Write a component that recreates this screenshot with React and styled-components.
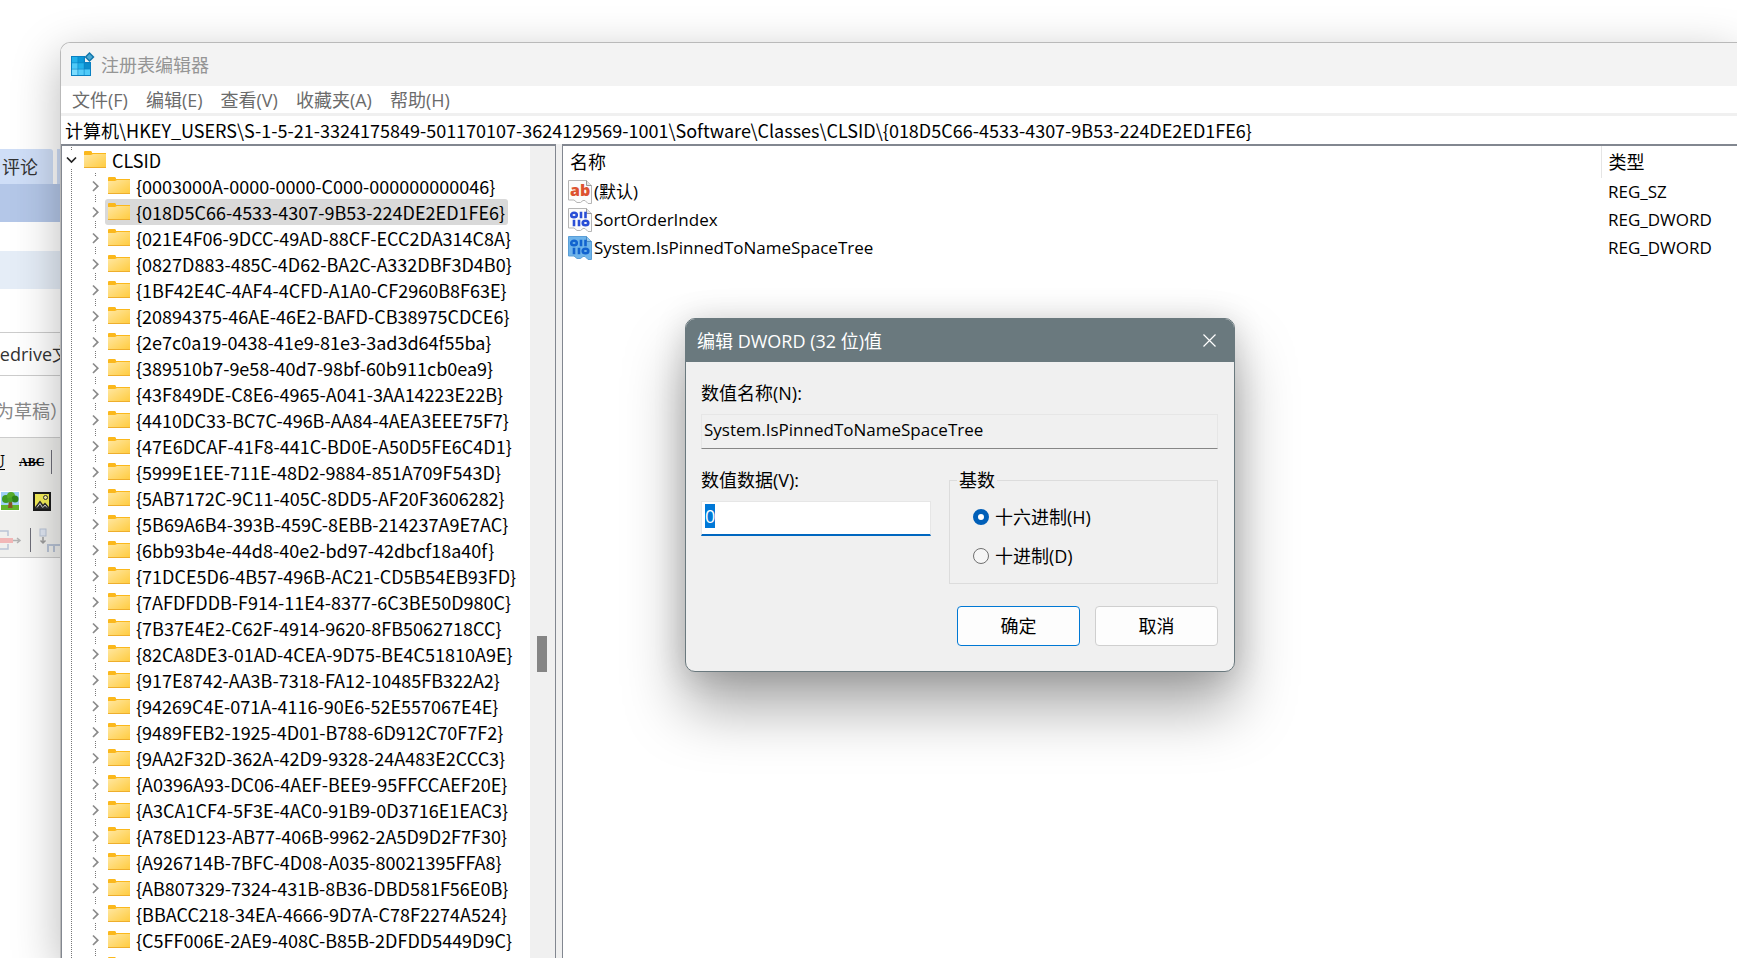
import React, { useEffect, useRef } from 'react';
import styled, { createGlobalStyle, css } from 'styled-components';

const KEYS = [
  '{0003000A-0000-0000-C000-000000000046}',
  '{018D5C66-4533-4307-9B53-224DE2ED1FE6}',
  '{021E4F06-9DCC-49AD-88CF-ECC2DA314C8A}',
  '{0827D883-485C-4D62-BA2C-A332DBF3D4B0}',
  '{1BF42E4C-4AF4-4CFD-A1A0-CF2960B8F63E}',
  '{20894375-46AE-46E2-BAFD-CB38975CDCE6}',
  '{2e7c0a19-0438-41e9-81e3-3ad3d64f55ba}',
  '{389510b7-9e58-40d7-98bf-60b911cb0ea9}',
  '{43F849DE-C8E6-4965-A041-3AA14223E22B}',
  '{4410DC33-BC7C-496B-AA84-4AEA3EEE75F7}',
  '{47E6DCAF-41F8-441C-BD0E-A50D5FE6C4D1}',
  '{5999E1EE-711E-48D2-9884-851A709F543D}',
  '{5AB7172C-9C11-405C-8DD5-AF20F3606282}',
  '{5B69A6B4-393B-459C-8EBB-214237A9E7AC}',
  '{6bb93b4e-44d8-40e2-bd97-42dbcf18a40f}',
  '{71DCE5D6-4B57-496B-AC21-CD5B54EB93FD}',
  '{7AFDFDDB-F914-11E4-8377-6C3BE50D980C}',
  '{7B37E4E2-C62F-4914-9620-8FB5062718CC}',
  '{82CA8DE3-01AD-4CEA-9D75-BE4C51810A9E}',
  '{917E8742-AA3B-7318-FA12-10485FB322A2}',
  '{94269C4E-071A-4116-90E6-52E557067E4E}',
  '{9489FEB2-1925-4D01-B788-6D912C70F7F2}',
  '{9AA2F32D-362A-42D9-9328-24A483E2CCC3}',
  '{A0396A93-DC06-4AEF-BEE9-95FFCCAEF20E}',
  '{A3CA1CF4-5F3E-4AC0-91B9-0D3716E1EAC3}',
  '{A78ED123-AB77-406B-9962-2A5D9D2F7F30}',
  '{A926714B-7BFC-4D08-A035-80021395FFA8}',
  '{AB807329-7324-431B-8B36-DBD581F56E0B}',
  '{BBACC218-34EA-4666-9D7A-C78F2274A524}',
  '{C5FF006E-2AE9-408C-B85B-2DFDD5449D9C}',
  '',
];

const SELECTED = '{018D5C66-4533-4307-9B53-224DE2ED1FE6}';

const VALUES = [
  { name: '(默认)', type: 'REG_SZ', kind: 'string' },
  { name: 'SortOrderIndex', type: 'REG_DWORD', kind: 'binary' },
  { name: 'System.IsPinnedToNameSpaceTree', type: 'REG_DWORD', kind: 'binary', selected: true },
];

const MENU = ['文件(F)', '编辑(E)', '查看(V)', '收藏夹(A)', '帮助(H)'];

function FolderIcon() {
  return (
    <svg width="22" height="18" viewBox="0 0 22 18" aria-hidden="true">
      <defs>
        <linearGradient id="folder" x1="0" y1="0" x2="1" y2="1">
          <stop offset="0" stopColor="#ffe7a2" />
          <stop offset="1" stopColor="#ffcb3d" />
        </linearGradient>
      </defs>
      <path d="M0 1Q0 0 1 0H7L8 1V2H22V5H0Z" fill="#fbb81c" />
      <path d="M0 4H7L9 3H22V17H0Z" fill="url(#folder)" />
      <path d="M0 16.5H22" stroke="#eeae2c" />
    </svg>
  );
}

function Chevron({ open }) {
  return (
    <svg width="13" height="18" viewBox="0 0 13 18" fill="none" aria-hidden="true">
      {open ? (
        <path d="M2 6.5L6.5 11L11 6.5" stroke="#222" strokeWidth="1.7" />
      ) : (
        <path d="M4 4.5L8.8 9.2L4 14" stroke="#8a8a8a" strokeWidth="1.7" />
      )}
    </svg>
  );
}

function RegeditIcon() {
  const fills = ['#22b1ea', '#0b98d8', null, '#4fcaf8', '#22b1ea', '#0b8ccb', '#7bdcff', '#55ccfa', '#4fcaf8'];
  return (
    <svg width="24" height="26" viewBox="0 0 24 26" aria-hidden="true">
      <path d="M0 4H14V10H20V24H0Z" fill="#0a80c2" />
      {fills.map(
        (fill, i) =>
          fill && (
            <rect key={i} x={1 + (i % 3) * 6.2} y={5 + Math.floor(i / 3) * 6.2} width="5.6" height="5.6" fill={fill} />
          )
      )}
      <path d="M18.5 0L23.5 5L18.5 10L13.5 5Z" fill="#0f75aa" />
      <path d="M18.5 2L21.5 5L18.5 8L15.5 5Z" fill="#4aa9d3" />
    </svg>
  );
}

function ValueIcon({ kind, selected }) {
  const ink = selected ? '#1263cf' : '#2a4fd6';
  return (
    <svg width="24" height="24" viewBox="0 0 24 24" aria-hidden="true">
      <path
        d="M0.5 0.5H18.5L23.5 5.5V23.5H20L17 20.5H15L12.5 22.5H9L6 20H0.5Z"
        fill={selected ? '#6fb4ea' : '#fbfbfb'}
        stroke={selected ? '#5a9fd8' : '#b5b5b5'}
      />
      <path d="M18.5 0.5V5.5H23.5" fill={selected ? '#93c8ef' : '#e4e4e4'} stroke={selected ? '#4f8cc0' : '#9a9a9a'} />
      {kind === 'string' ? (
        <text x="2" y="16" fontFamily="Open Sans, sans-serif" fontSize="16" fontWeight="800" fill="#dd5330">
          ab
        </text>
      ) : (
        <g fill="none" stroke={ink} strokeWidth="2.6">
          <ellipse cx="6" cy="7" rx="2.8" ry="2.2" />
          <path d="M13 3.7V10.3M17.5 3.7V10.3M6 11.7V18.3M11 11.7V18.3" />
          <ellipse cx="17.5" cy="15" rx="2.8" ry="2.2" />
        </g>
      )}
    </svg>
  );
}

function TreePicture() {
  return (
    <svg width="20" height="20" viewBox="0 0 20 20" aria-hidden="true">
      <rect width="20" height="20" fill="#fff" />
      <rect x="1" y="1" width="18" height="14" fill="#9fd0f5" />
      <rect x="1" y="14" width="18" height="5" fill="#63b52c" />
      <path d="M9 9H12L12.5 17H8Z" fill="#8a5526" />
      <circle cx="6" cy="8" r="4" fill="#3f9a22" />
      <circle cx="11" cy="5" r="4" fill="#57ad2c" />
      <circle cx="15" cy="8" r="3.5" fill="#2f851c" />
      <circle cx="10" cy="9" r="2.5" fill="#48a327" />
    </svg>
  );
}

function LandscapePicture() {
  return (
    <svg width="18" height="19" viewBox="0 0 18 19" aria-hidden="true">
      <rect x="1" y="1" width="16" height="17" fill="#f5ee58" stroke="#1c1c1c" strokeWidth="2" />
      <circle cx="12.5" cy="5.5" r="2" fill="#fff6a8" stroke="#333" />
      <path d="M2 15L7 8.5L10 12.5L12 10.5L16 15V17H2Z" fill="#2d2d2d" />
      <path d="M4 15.5L7 11.5L9.5 15.5M10 15.5L12 13L14 15.5" fill="none" stroke="#d8d8d8" />
    </svg>
  );
}

function FadedAlign() {
  return (
    <svg width="22" height="20" viewBox="0 0 22 20" fill="none" aria-hidden="true">
      <path d="M0 1H8V6M0 19H8V14" stroke="#b9c4d6" strokeWidth="1.5" />
      <rect x="0" y="8" width="13" height="5" fill="#f1b7b7" />
      <path d="M13 10.5H20M17 8L20 10.5L17 13" stroke="#b3b3b3" strokeWidth="1.5" />
    </svg>
  );
}

function FadedFlow() {
  return (
    <svg width="22" height="24" viewBox="0 0 22 24" fill="none" aria-hidden="true">
      <rect x="1" y="1" width="6" height="7" fill="#dfe6f2" stroke="#b9c4d6" />
      <path d="M4 9V15M1.5 12.5L4 15L6.5 12.5" stroke="#9c9c9c" strokeWidth="1.5" />
      <path d="M9 24V17H22M15 17V24" stroke="#b9c4d6" strokeWidth="2" />
    </svg>
  );
}

export default function App() {
  const dataRef = useRef(null);

  useEffect(() => {
    dataRef.current.focus();
    dataRef.current.select();
  }, []);

  return (
    <>
      <GlobalStyle />
      <Desktop>
        <Backdrop>
          <TabStrip>
            <PageTab>评论</PageTab>
            <PageTab />
          </TabStrip>
          <Band />
          <PaleBand />
          <TitleField>nedrive文</TitleField>
          <DraftNote>为草稿）</DraftNote>
          <EditorTools>
            <ToolRow>
              <Underlined>U</Underlined>
              <Struck>ABC</Struck>
              <ToolDivider />
            </ToolRow>
            <ToolRow $gap={13}>
              <TreePicture />
              <LandscapePicture />
            </ToolRow>
            <ToolRow $gap={8}>
              <FadedAlign />
              <ToolDivider />
              <FadedFlow />
            </ToolRow>
          </EditorTools>
        </Backdrop>

        <Window>
          <TitleBar>
            <RegeditIcon />
            注册表编辑器
          </TitleBar>
          <MenuBar>
            {MENU.map((item) => (
              <MenuButton key={item}>{item}</MenuButton>
            ))}
          </MenuBar>
          <Address
            aria-label="地址"
            readOnly
            value="计算机\HKEY_USERS\S-1-5-21-3324175849-501170107-3624129569-1001\Software\Classes\CLSID\{018D5C66-4533-4307-9B53-224DE2ED1FE6}"
          />
          <Panes>
            <TreePane>
              <Tree>
                <TreeRow>
                  <Toggle aria-label="折叠">
                    <Chevron open />
                  </Toggle>
                  <Key>
                    <FolderIcon />
                    CLSID
                  </Key>
                </TreeRow>
                {KEYS.map((key) => (
                  <TreeRow key={key}>
                    <Trunk />
                    <Toggle aria-label="展开">
                      <Chevron />
                    </Toggle>
                    <Key $selected={key === SELECTED}>
                      <FolderIcon />
                      {key}
                    </Key>
                  </TreeRow>
                ))}
              </Tree>
              <Scrollbar>
                <Thumb />
              </Scrollbar>
            </TreePane>
            <ListPane>
              <ValueTable>
                <thead>
                  <tr>
                    <HeadCell>名称</HeadCell>
                    <HeadCell $type>类型</HeadCell>
                  </tr>
                </thead>
                <tbody>
                  {VALUES.map((value) => (
                    <tr key={value.name}>
                      <Cell>
                        <ValueName>
                          <ValueIcon kind={value.kind} selected={value.selected} />
                          {value.name}
                        </ValueName>
                      </Cell>
                      <Cell $type>{value.type}</Cell>
                    </tr>
                  ))}
                </tbody>
              </ValueTable>
            </ListPane>
          </Panes>
        </Window>

        <Dialog role="dialog" aria-labelledby="dialog-title">
          <DialogTitle>
            <span id="dialog-title">编辑 DWORD (32 位)值</span>
            <CloseButton aria-label="关闭">
              <svg width="13" height="13" viewBox="0 0 13 13" stroke="#fff" strokeWidth="1.2">
                <path d="M0.5 0.5L12.5 12.5M12.5 0.5L0.5 12.5" />
              </svg>
            </CloseButton>
          </DialogTitle>
          <DialogBody>
            <Label htmlFor="value-name">数值名称(N):</Label>
            <NameInput id="value-name" readOnly value="System.IsPinnedToNameSpaceTree" />
            <Columns>
              <DataField>
                <Label htmlFor="value-data">数值数据(V):</Label>
                <DataInput id="value-data" ref={dataRef} defaultValue="0" />
              </DataField>
              <Base>
                <legend>基数</legend>
                <Choice>
                  <Radio name="base" defaultChecked />
                  十六进制(H)
                </Choice>
                <Choice>
                  <Radio name="base" />
                  十进制(D)
                </Choice>
              </Base>
            </Columns>
            <Actions>
              <Button $primary>确定</Button>
              <Button>取消</Button>
            </Actions>
          </DialogBody>
        </Dialog>
      </Desktop>
    </>
  );
}

const GlobalStyle = createGlobalStyle`
  * {
    box-sizing: border-box;
  }

  body {
    margin: 0;
    background: #fff;
    font-family: 'Open Sans', 'Noto Sans CJK SC', sans-serif;
    font-size: 18px;
    line-height: 24px;
    color: #000;
  }

  button,
  input {
    font: inherit;
    color: inherit;
  }

  svg {
    flex: none;
    display: block;
  }
`;

const dotted = css`
  background: repeating-linear-gradient(#777 0 1px, transparent 1px 2px) 9px 0 / 1px 100% no-repeat;
`;

const Desktop = styled.div`
  position: relative;
  display: grid;
  grid-template-columns: 60px minmax(0, 1fr);
  height: 100vh;
  overflow: hidden;
`;

/* the web page that shows behind the registry window */
const Backdrop = styled.div`
  display: flex;
  flex-direction: column;
  padding-top: 149px;
  overflow: hidden;
  white-space: nowrap;
  color: #333;
`;

const TabStrip = styled.div`
  display: flex;
  gap: 4px;
  height: 35px;
`;

const PageTab = styled.div`
  flex: none;
  width: 53px;
  padding: 6px 0 0 2px;
  border-radius: 0 3px 0 0;
  background: #cfdef7;
`;

const Band = styled.div`
  height: 38px;
  background: #b4c7e8;
`;

const PaleBand = styled.div`
  height: 38px;
  margin-top: 29px;
  background: #e5edf7;
`;

const TitleField = styled.div`
  display: flex;
  justify-content: flex-end;
  align-items: center;
  width: 70px;
  height: 44px;
  margin-top: 43px;
  border: solid #ccc;
  border-width: 1px 0;
`;

const DraftNote = styled.div`
  display: flex;
  justify-content: flex-end;
  align-items: center;
  width: 68px;
  height: 61px;
  padding-top: 8px;
  color: #888;
`;

const EditorTools = styled.div`
  display: flex;
  flex-direction: column;
  gap: 15px;
  padding: 12px 0 5px;
  border: solid #ccc;
  border-width: 1px 0;
  background: #f0f0ee;
`;

const ToolRow = styled.div`
  display: flex;
  align-items: center;
  gap: ${(p) => p.$gap || 0}px;
  height: 24px;
`;

const Underlined = styled.span`
  display: flex;
  justify-content: flex-end;
  width: 5px;
  margin-right: 14px;
  font: bold 18px 'Liberation Serif', serif;
  text-decoration: underline;
  color: #000;
`;

const Struck = styled.span`
  width: 32px;
  font: bold 12px 'Liberation Serif', serif;
  text-decoration: line-through;
  color: #000;
`;

const ToolDivider = styled.span`
  flex: none;
  width: 1px;
  height: 24px;
  background: #6d6d78;
`;

const Window = styled.main`
  display: flex;
  flex-direction: column;
  margin-top: 42px;
  border: solid #b9b9b9;
  border-width: 1px 0 0 1px;
  border-radius: 10px 0 0 0;
  background: #fff;
  box-shadow: 0 14px 48px rgba(0, 0, 0, 0.28);
  overflow: hidden;
`;

const TitleBar = styled.header`
  display: flex;
  align-items: center;
  gap: 6px;
  height: 43px;
  padding-left: 10px;
  background: #f3f3f3;
  color: #959595;
`;

const MenuBar = styled.nav`
  display: flex;
  gap: 18px;
  height: 30px;
  padding-left: 11px;
  border-bottom: 3px solid #f0f0f0;
`;

const MenuButton = styled.button`
  padding: 0;
  border: none;
  background: none;
  color: #6b6b6b;
`;

const Address = styled.input`
  height: 28px;
  padding: 0 4px;
  border: none;
  outline: none;
  font-family: 'Noto Sans CJK SC', sans-serif;
`;

const Panes = styled.div`
  display: flex;
  gap: 6px;
  flex: 1;
  min-height: 0;
  background: #f0f0f0;
`;

const pane = css`
  border: solid #828790;
  border-width: 2px 1px 0;
  background: #fff;
  overflow: hidden;
`;

const TreePane = styled.section`
  ${pane}
  display: flex;
  flex: none;
  width: 495px;
`;

const Tree = styled.ul`
  flex: 1;
  margin: 0;
  padding: 1px 0 0;
  list-style: none;
  font-family: 'Noto Sans CJK SC', sans-serif;
`;

const TreeRow = styled.li`
  display: flex;
  height: 26px;
`;

const Trunk = styled.span`
  flex: none;
  width: 24px;
  ${dotted}
`;

const Toggle = styled.button`
  display: flex;
  align-items: center;
  justify-content: center;
  width: 19px;
  padding: 0;
  border: none;
  ${dotted}

  svg {
    background: #fff;
  }
`;

const Key = styled.span`
  display: flex;
  align-items: center;
  gap: 6px;
  padding: 0 3px;
  border-radius: 3px;
  background: ${(p) => (p.$selected ? '#d9d9d9' : 'none')};
  white-space: nowrap;
`;

const Scrollbar = styled.div`
  width: 25px;
  padding: 490px 8px 0 7px;
  background: #f0f0f0;
`;

const Thumb = styled.div`
  height: 36px;
  background: #858585;
`;

const ListPane = styled.section`
  ${pane}
  flex: 1;
  border-right: none;
`;

const ValueTable = styled.table`
  width: 100%;
  border-collapse: collapse;
`;

const HeadCell = styled.th`
  width: ${(p) => (p.$type ? '136px' : 'auto')};
  height: 32px;
  padding: 0 7px;
  border-left: ${(p) => (p.$type ? '1px solid #e5e5e5' : 'none')};
  text-align: left;
  font-weight: 400;
`;

const Cell = styled.td`
  height: 28px;
  padding: 0 0 0 ${(p) => (p.$type ? 7 : 5)}px;
  font-size: 17px;
`;

const ValueName = styled.span`
  display: flex;
  align-items: center;
  gap: 2px;
`;

const Dialog = styled.section`
  position: absolute;
  left: 685px;
  top: 318px;
  width: 550px;
  border: 1px solid #6a797e;
  border-radius: 10px;
  background: #f0f0f0;
  box-shadow: 0 36px 60px rgba(0, 0, 0, 0.34), 0 2px 32px rgba(0, 0, 0, 0.16);
  overflow: hidden;
`;

const DialogTitle = styled.header`
  display: flex;
  align-items: center;
  justify-content: space-between;
  height: 43px;
  padding: 0 7px 0 11px;
  background: #6a797e;
  color: #fff;
`;

const CloseButton = styled.button`
  display: grid;
  place-items: center;
  width: 36px;
  height: 36px;
  padding: 0;
  border: none;
  background: none;
`;

const DialogBody = styled.div`
  display: flex;
  flex-direction: column;
  padding: 19px 16px 25px 15px;
`;

const Label = styled.label`
  margin-bottom: 9px;
`;

const input = css`
  height: 35px;
  border: 1px solid #e6e6e6;
  outline: none;
`;

const NameInput = styled.input`
  ${input}
  padding: 0 2px 4px;
  border-bottom-color: #868686;
  background: #f0f0f0;
  font-size: 17px;
`;

const Columns = styled.div`
  display: flex;
  gap: 18px;
  margin-top: 19px;
`;

const DataField = styled.div`
  display: flex;
  flex: none;
  flex-direction: column;
  width: 230px;
`;

const DataInput = styled.input`
  ${input}
  padding: 0 3px 4px;
  border-bottom: 2px solid #0067c0;
  background: #fff;

  &::selection {
    background: #0078d7;
    color: #fff;
  }
`;

const Base = styled.fieldset`
  display: flex;
  flex: 1;
  flex-direction: column;
  gap: 15px;
  margin: 0;
  padding: 13px 23px 15px;
  border: 1px solid #dcdcdc;

  legend {
    margin-left: -16px;
    padding: 0 2px;
  }
`;

const Choice = styled.label`
  display: flex;
  align-items: center;
  gap: 6px;
`;

const Radio = styled.input.attrs({ type: 'radio' })`
  appearance: none;
  width: 16px;
  height: 16px;
  margin: 0;
  border: 1px solid #707070;
  border-radius: 50%;
  background: #f6f6f6;

  &:checked {
    border: 5px solid #005fb8;
    background: #fff;
  }
`;

const Actions = styled.div`
  display: flex;
  justify-content: flex-end;
  gap: 15px;
  margin-top: 22px;
`;

const Button = styled.button`
  width: 123px;
  height: 40px;
  border: 1px solid ${(p) => (p.$primary ? '#0078d4' : '#cfcfcf')};
  border-radius: 4px;
  background: #fdfdfd;
`;
